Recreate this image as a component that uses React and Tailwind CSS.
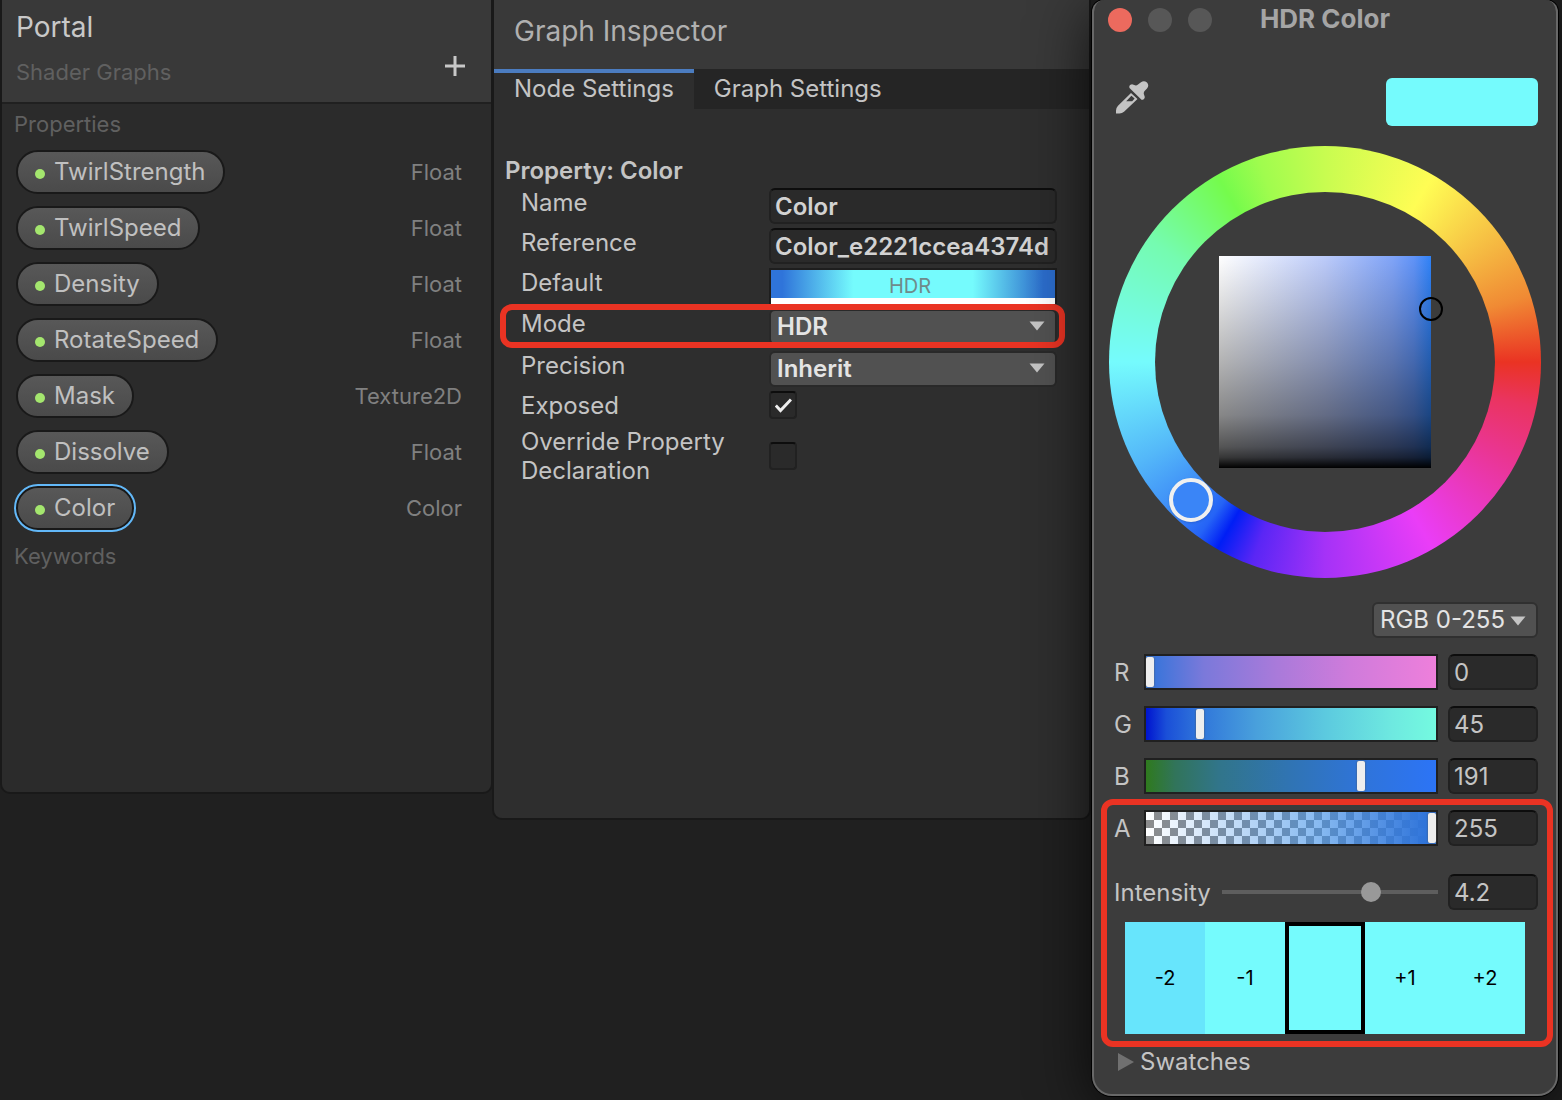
import React, { useState } from 'react';

const properties = [
  { name: 'TwirlStrength', type: 'Float' },
  { name: 'TwirlSpeed', type: 'Float' },
  { name: 'Density', type: 'Float' },
  { name: 'RotateSpeed', type: 'Float' },
  { name: 'Mask', type: 'Texture2D' },
  { name: 'Dissolve', type: 'Float' },
  { name: 'Color', type: 'Color' }
];

const channels = [
  {
    name: 'R',
    value: 0,
    track: 'bg-[linear-gradient(90deg,#2f74da,#7b79da_20%,#a97ada_45%,#cf7bdb_70%,#ee7fdb)]'
  },
  {
    name: 'G',
    value: 45,
    track: 'bg-[linear-gradient(90deg,#0014cf,#1a4fd8_7%,#2f74da_18%,#49a0dc_38%,#5ccadf_62%,#6ee9e0_85%,#74fae0)]'
  },
  {
    name: 'B',
    value: 191,
    track: 'bg-[linear-gradient(90deg,#2f7a1e,#31745a_10%,#31758a_25%,#3074b4_50%,#2f74da_75%,#2c74f6)]'
  },
  {
    name: 'A',
    value: 255,
    track:
      'bg-[linear-gradient(90deg,#2f90e800,#3f90e8a0_60%,#2f74da_97%),repeating-conic-gradient(#8c8c8c_0_25%,#fff_0_50%)] bg-[length:100%_100%,16px_16px]'
  }
];

const exposures = [
  { label: '-2', color: 'bg-[#67e5fc]' },
  { label: '-1', color: 'bg-[#75fbfd]' },
  { label: '', color: 'bg-[#75fbfd] border-4 border-black' },
  { label: '+1', color: 'bg-[#75fbfd]' },
  { label: '+2', color: 'bg-[#75fbfd]' }
];

const fieldClass =
  'block h-9 w-full min-w-0 rounded-md border-2 border-[#212121] border-t-[#0d0d0d] bg-[#2a2a2a] px-1 outline-none';

const Arrow = ({ className }) => (
  <svg className={className} width="16" height="10" viewBox="0 0 16 10" fill="#c4c4c4" aria-hidden="true">
    <path d="M0.5 0.5h15L8 9.5z" />
  </svg>
);

const Eyedropper = () => (
  <svg width="33" height="33" viewBox="0 0 33 33" fill="#c4c4c4" aria-hidden="true">
    <path
      fillRule="evenodd"
      d="M15 12 2 24.800Q0 27 0 29.500V32.500H3.500Q6 32.500 8 30.800L21.500 18ZM15.400 14.800 18.600 17.600 16.200 20.200H10.200Z"
    />
    <path d="M13.500 7Q12.500 3.500 16 3.300L19 4.300Q20.500 4.800 22 3.500L25 1.200Q28-1 31 1.500 33.500 4.500 31 7.500L28.600 10Q27.300 11.500 28 13.500L28.800 16Q28.500 19 25.500 18.800Z" />
  </svg>
);

const Blackboard = () => (
  <section className="overflow-hidden rounded-b-lg bg-[#2b2b2b] pb-54 shadow-[0_0_0_2px_#191919]">
    <header className="flex items-center justify-between border-b-2 border-[#202020] bg-[#393939] pt-2 pr-[26px] pb-3.5 pl-3.5">
      <div>
        <h1 className="text-[28px] leading-[38px] text-[#c8c8c8]">Portal</h1>
        <p className="pt-2.5 text-[22px] leading-8 text-[#606060]">Shader Graphs</p>
      </div>
      <button type="button" aria-label="Add property" className="pt-9">
        <svg width="20" height="20" viewBox="0 0 20 20" stroke="#c8c8c8" strokeWidth="3" aria-hidden="true">
          <path d="M10 0v20M0 10h20" />
        </svg>
      </button>
    </header>
    <h2 className="px-3 py-1 text-[22px] leading-8 text-[#606060]">Properties</h2>
    <ul>
      {properties.map((item) => (
        <li key={item.name} className="flex h-14 items-center justify-between pr-[29px] pl-3.5">
          <button
            type="button"
            className={`flex h-11 items-center gap-[9px] rounded-full border-2 border-[#191919] bg-linear-to-b from-[#585858] to-[#4a4a4a] px-[17px] text-2xl text-[#c0c0c0] ${
              item.name === 'Color' ? 'outline-2 outline-[#62b8f8]' : ''
            }`}
          >
            <span className="mt-1 size-2.5 rounded-full bg-[#a4e66e]" />
            {item.name}
          </button>
          <span className="text-[22px] text-[#808080]">{item.type}</span>
        </li>
      ))}
    </ul>
    <h2 className="px-3 py-1 text-[22px] leading-8 text-[#606060]">Keywords</h2>
  </section>
);

const Row = ({ id, label, className = 'h-10', children }) => (
  <div className={`relative grid grid-cols-[248fr_288fr] items-start ${className}`}>
    <label htmlFor={id} className="pr-10 leading-[29px]">
      {label}
    </label>
    {children}
  </div>
);

const Dropdown = ({ id, options }) => (
  <div className="relative">
    <select
      id={id}
      className="block h-9 w-full appearance-none rounded-md border-2 border-[#292929] bg-[#515151] px-1.5 font-semibold text-[#e4e4e4] outline-none"
    >
      {options.map((option) => (
        <option key={option}>{option}</option>
      ))}
    </select>
    <Arrow className="pointer-events-none absolute top-3 right-3" />
  </div>
);

const Checkbox = ({ id, defaultChecked }) => (
  <span className="relative block size-7">
    <input
      id={id}
      type="checkbox"
      defaultChecked={defaultChecked}
      className="peer block size-7 appearance-none rounded-sm border-2 border-[#212121] border-t-[#0d0d0d] bg-[#2a2a2a]"
    />
    <svg
      className="pointer-events-none absolute top-1.5 left-1.5 hidden peer-checked:block"
      width="17"
      height="17"
      viewBox="0 0 17 17"
      fill="none"
      stroke="#eeeeee"
      strokeWidth="3"
      aria-hidden="true"
    >
      <path d="M0.800 8.500 5.500 13.500 16 2.500" />
    </svg>
  </span>
);

const Inspector = () => (
  <section className="overflow-hidden rounded-b-lg bg-[#2e2e2e] pb-[333px] text-2xl text-[#c4c4c4] shadow-[0_0_0_2px_#191919]">
    <h1 className="bg-[#393939] px-5 pt-3 pb-[18px] text-[28px] leading-[39px] text-[#b0b0b0]">Graph Inspector</h1>
    <div role="tablist" className="flex h-10 items-stretch bg-[#252525]">
      <button type="button" role="tab" aria-selected="true" className="border-t-4 border-[#4b7cc0] bg-[#2e2e2e] px-5 pb-1 leading-8">
        Node Settings
      </button>
      <button type="button" role="tab" aria-selected="false" className="px-5 pt-1 pb-1 leading-8">
        Graph Settings
      </button>
    </div>
    <h2 className="px-[11px] pt-11 leading-[35px] font-semibold">Property: Color</h2>
    <div className="pr-8 pl-[27px]">
      <Row id="name" label="Name">
        <input id="name" className={`${fieldClass} font-semibold text-[#d2d2d2]`} defaultValue="Color" />
      </Row>
      <Row id="reference" label="Reference">
        <input
          id="reference"
          className={`${fieldClass} font-semibold text-[#d2d2d2]`}
          defaultValue="Color_e2221ccea4374d"
        />
      </Row>
      <Row id="default" label="Default" className="h-[41px]">
        <button
          id="default"
          type="button"
          className="flex h-9 flex-col border-2 border-[#1e1e1e] bg-[linear-gradient(90deg,#2f74da_4%,#75fbfd_29%,#75fbfd_71%,#2b6ccb_96%)] text-xl text-[#6f8b8b]"
        >
          <span className="w-full flex-1 pt-1 pr-1.5 leading-6">HDR</span>
          <span className="h-1.5 w-full shrink-0 bg-white" />
        </button>
      </Row>
      <Row id="mode" label="Mode" className="h-[42px]">
        <Dropdown id="mode" options={['HDR', 'Default']} />
        <span className="pointer-events-none absolute top-[-5px] -right-2 bottom-[3px] left-[-21px] rounded-xl border-6 border-[#ea3323]" />
      </Row>
      <Row id="precision" label="Precision">
        <Dropdown id="precision" options={['Inherit', 'Single', 'Half']} />
      </Row>
      <Row id="exposed" label="Exposed" className="h-9">
        <Checkbox id="exposed" defaultChecked />
      </Row>
      <div className="grid grid-cols-[248fr_288fr] items-center">
        <label htmlFor="override" className="pr-10 leading-[29px]">
          Override Property Declaration
        </label>
        <Checkbox id="override" />
      </div>
    </div>
  </section>
);

const ColorWheel = () => (
  <div className="relative mx-auto mt-5 flex size-[432px] items-center justify-center rounded-full bg-[conic-gradient(from_90deg,#ea3323,#ea3460_12deg,#ea3592_28deg,#ea3df7_60deg,#a532f7_90deg,#5a26f5_110deg,#001ef5_120deg,#2563f6_126deg,#3a85f7_134deg,#54b8f9_152deg,#75fbfd_180deg,#75fbb0_215deg,#75fb4c_240deg,#a0fc4e_252deg,#c8fc50_270deg,#fffd54_300deg,#f5b741_326deg,#f08a34_342deg,#ea3323)]">
    <div className="flex size-[340px] items-center justify-center rounded-full bg-[#3c3c3c]">
      <div className="size-[212px] bg-[linear-gradient(0deg,#000,#000000c8_5%,#000000aa_10%,#00000078_25%,#0000004c_50%,#00000022_77%,#0000),linear-gradient(90deg,#fff,#bccbfa_50%,#80a4f8_82%,#6093f8_92%,#2f82f7)]" />
    </div>
    <span className="absolute top-[151px] left-[310px] size-6 rounded-full border-2 border-black" />
    <span className="absolute top-[332px] left-15 size-11 rounded-full border-4 border-[#f0f0f0] bg-[#3a85f7] shadow-sm" />
  </div>
);

const Channel = ({ name, value, track }) => {
  const [current, setCurrent] = useState(value);

  return (
    <div className="flex h-9 items-center">
      <label htmlFor={`channel-${name}`} className="w-[30px] shrink-0 pt-0.5">
        {name}
      </label>
      <input
        id={`channel-${name}`}
        type="range"
        min="0"
        max="255"
        value={current}
        onChange={(e) => setCurrent(Number(e.target.value))}
        className={`block h-9 min-w-0 flex-1 appearance-none border-2 border-[#202020] bg-origin-content ${track} [&::-webkit-slider-thumb]:h-[30px] [&::-webkit-slider-thumb]:w-2 [&::-webkit-slider-thumb]:appearance-none [&::-webkit-slider-thumb]:rounded-xs [&::-webkit-slider-thumb]:bg-[#eeeeee] [&::-webkit-slider-thumb]:shadow-[0_0_2px_#555]`}
      />
      <div className="ml-2.5 w-[90px] shrink-0">
        <input
          aria-label={`${name} value`}
          className={fieldClass}
          value={current}
          onChange={(e) => setCurrent(Number(e.target.value) || 0)}
        />
      </div>
    </div>
  );
};

const ColorPicker = () => (
  <section className="relative rounded-t-xl rounded-b-[20px] border-x-2 border-b-2 border-[#686868] bg-[#3c3c3c] pb-3.5 text-2xl text-[#c4c4c4] shadow-[0_0_0_1px_#000,0_12px_60px_#000000c0]">
    <header className="grid h-10 grid-cols-[1fr_auto_1fr] items-center px-3.5">
      <div className="flex gap-4">
        <button type="button" aria-label="Close" className="size-6 rounded-full bg-[#ec6a5e]" />
        <button type="button" aria-label="Minimize" className="size-6 rounded-full bg-[#575757]" />
        <button type="button" aria-label="Zoom" className="size-6 rounded-full bg-[#575757]" />
      </div>
      <h1 className="pb-0.5 text-[26px] font-bold text-[#a5a5a5]">HDR Color</h1>
    </header>

    <div className="flex items-start justify-between pt-[38px] pr-[18px] pl-5">
      <button type="button" aria-label="Pick color" className="pt-[3px] pl-0.5">
        <Eyedropper />
      </button>
      <div className="h-12 w-[152px] rounded-md bg-[#75fbfd]" />
    </div>

    <ColorWheel />

    <div className="pt-6 pr-[18px] pl-5">
      <div className="relative ml-auto w-[166px]">
        <select
          aria-label="Color mode"
          className="block h-9 w-full appearance-none rounded-md border-2 border-[#303030] bg-[#515151] px-1.5 text-[#e4e4e4] outline-none"
        >
          <option>RGB 0-255</option>
          <option>RGB 0-1.0</option>
          <option>HSV</option>
        </select>
        <Arrow className="pointer-events-none absolute top-3.5 right-3" />
      </div>

      <div className="mt-4 flex flex-col gap-4">
        {channels.map((channel) => (
          <Channel key={channel.name} {...channel} />
        ))}
      </div>

      <div className="mt-7 flex h-9 items-center">
        <label htmlFor="intensity" className="w-[108px] shrink-0 pt-0.5">
          Intensity
        </label>
        <input
          id="intensity"
          type="range"
          min="-10"
          max="10"
          step="0.1"
          defaultValue="4.2"
          className="block h-5 min-w-0 flex-1 appearance-none bg-[linear-gradient(#5e5e5e,#5e5e5e)] bg-[length:100%_4px] bg-center bg-no-repeat [&::-webkit-slider-thumb]:size-5 [&::-webkit-slider-thumb]:appearance-none [&::-webkit-slider-thumb]:rounded-full [&::-webkit-slider-thumb]:bg-[#999999]"
        />
        <div className="ml-2.5 w-[90px] shrink-0">
          <input aria-label="Intensity value" className={fieldClass} defaultValue="4.2" />
        </div>
      </div>

      <div className="mt-3 mr-[13px] ml-[11px] grid h-28 grid-cols-5 text-xl text-black">
        {exposures.map((step, i) => (
          <button key={i} type="button" aria-label={step.label || 'Current exposure'} className={step.color}>
            {step.label}
          </button>
        ))}
      </div>

      <button type="button" className="mt-2.5 flex h-9 items-center gap-1.5 pl-1">
        <svg width="16" height="18" viewBox="0 0 16 18" fill="#707070" aria-hidden="true">
          <path d="M0 0 16 9 0 18z" />
        </svg>
        Swatches
      </button>
    </div>
    <span className="pointer-events-none absolute right-[3px] bottom-[47px] left-[7px] h-[248px] rounded-xl border-6 border-[#ea3323]" />
  </section>
);

const App = () => (
  <main className="grid min-h-screen grid-cols-[489fr_595fr_466fr] items-start gap-[3px] overflow-hidden bg-[#202020] pr-1 pl-0.5 font-['Inter',sans-serif]">
    <Blackboard />
    <Inspector />
    <ColorPicker />
  </main>
);

export default App;
